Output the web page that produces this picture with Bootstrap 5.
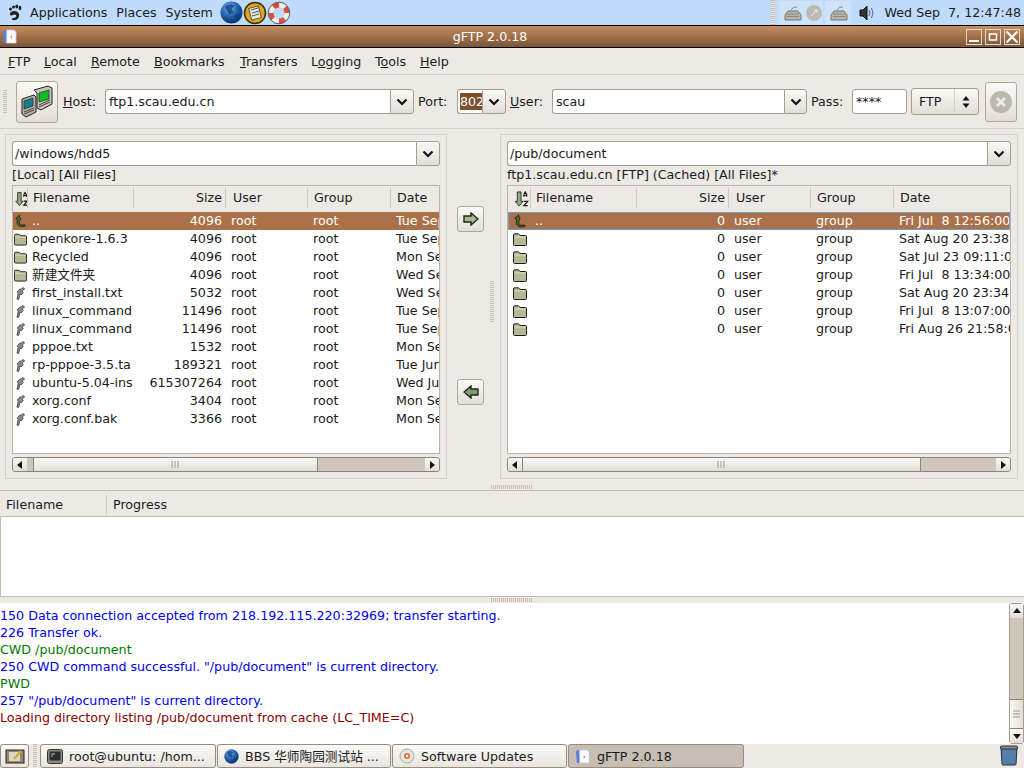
<!DOCTYPE html>
<html lang="en"><head><meta charset="utf-8"><title>gFTP 2.0.18</title>
<link href="https://cdn.jsdelivr.net/npm/bootstrap@5.3.0/dist/css/bootstrap.min.css" rel="stylesheet">
<style>
html,body{height:768px;overflow:hidden}
body{background:#edeae5;color:#1a1a1a;font:12.67px/17px "DejaVu Sans","Noto Sans CJK SC",sans-serif;width:1024px}
.defs{position:absolute;width:0;height:0}
.shell{height:768px}
.gp{height:26px;background:#bfdcfd;border-bottom:1px solid #000;flex:none}
.gp .m{margin-left:9px}
.gp .logo{margin-left:8px}
.gp .m0{margin-left:8px}
.tray{background:#cfe3f8}
.title{height:22px;flex:none;background:linear-gradient(#c68c5e,#7a5537);border-bottom:1px solid #000;color:#fff}
.title .t{flex:1;text-align:center}
.wb{width:16px;height:16px;border:1px solid #e8d6c6;margin-left:3px;display:flex;align-items:center;justify-content:center}
.menubar{height:27px;flex:none;border-bottom:1px solid #d6d0c8;padding-left:8px}
.menubar span{display:block;white-space:nowrap}
.tb{height:54px;flex:none;border-bottom:1px solid #d6d0c8;padding-left:3px}
.grip{width:4px;flex:none;background:repeating-linear-gradient(#c8bfb4 0 1px,#edeae5 1px 2px)}
.g25{height:24px;margin-right:9px}
.fbtn{padding:0;background:linear-gradient(#fbfaf8,#e2ddd6);border:1px solid #b3a698;border-radius:3px;display:flex;align-items:center;justify-content:center;flex:none;color:#000}
.connect{width:42px;height:42px;margin-right:5px}
.stop{width:32px;height:40px;margin-left:6px}
.inp{height:25px;flex:none;background:#fff;border:1px solid #a99c8d;border-radius:3px 0 0 3px;border-right:0;padding:0 3px;line-height:23px;overflow:hidden;white-space:nowrap;color:#1a1a1a}
.dd{width:24px;height:25px;flex:none;background:linear-gradient(#fbfaf8,#e2ddd6);border:1px solid #a99c8d;border-radius:0 3px 3px 0;display:flex;align-items:center;justify-content:center}
.lbl{flex:none;margin-left:4px}
.sel{background:#7c4f2d;color:#fff;display:inline-block;line-height:17px}
.pass{border-right:1px solid #a99c8d;border-radius:3px}
.proto{width:68px;height:27px;flex:none;background:linear-gradient(#fbfaf8,#e2ddd6);border:1px solid #a99c8d;border-radius:3px;margin-left:4px;padding-left:7px}
.proto i{display:block;width:1px;height:25px;background:#d6d0c8;margin-left:auto;margin-right:7px}
.proto svg{margin-right:8px}
.panes{height:355px;flex:none;padding:5px 6px 5px 5px}
.pane{border:1px solid #d6d0c8;padding:6px 6px 5px 6px;height:345px;min-width:0;flex:none}
.pl{width:442px}.pr{width:518px}
.mid{width:53px;flex:none;position:relative}
.arrow{width:27px;height:26px;position:absolute;left:10px}
.vgrip{position:absolute;left:43px;top:147px;height:42px;width:4px;background:repeating-linear-gradient(#cabfb3 0 1px,#edeae5 1px 2px)}
.path{height:25px}
.path .inp{flex:1;padding:0 2px}
.cap{height:17px;line-height:17px;white-space:nowrap;overflow:hidden}
.lst{height:269px;border:1px solid #bdb3a6;background:#fff;overflow:hidden;flex:none;margin-top:2px}
.hd{height:26px;background:#edeae5;display:flex;align-items:center;padding-bottom:2px}
.hd>div{height:20px;line-height:20px;border-left:1px solid #d0c9bf;padding-left:5px;flex:none;white-space:nowrap}
.hd>div:first-child{border:0;padding:0 0 0 2px}
.hd .c3{padding-right:3px;text-align:right}
.hd .c4{padding-left:7px}
.hd .c5,.hd .c6{padding-left:6px}
.r{height:18px;display:flex;line-height:18px;white-space:nowrap}
.r>div{flex:none;overflow:hidden;padding-left:6px}
.r>div:first-child{padding-left:1px;display:flex;align-items:center}
.r .c2{padding-left:5px}
.r .s{text-align:right;padding:0 3px 0 0}
.r.on{background:#ab7249;color:#fff}
.pr .r.on{outline:1px solid #6f9cc9;outline-offset:-1px}
.c1{width:14px}.c2{width:106px}.c3{width:92px}.c4{width:82px}.c5{width:83px}.c6{width:60px}
.pr .c1{width:22px}.pr .c6{width:125px}
.pr .r>div:first-child{padding-left:5px}
.sbh{height:15px;margin-top:3px;display:flex;background:#d0c7bc;border:1px solid #8f8476;border-radius:3px;flex:none;overflow:hidden}
.sb-b{width:14px;flex:none;background:linear-gradient(#fbfaf8,#e2ddd6);display:flex;align-items:center;justify-content:center}
.thumb{background:linear-gradient(#fbfaf8,#e2ddd6);border-left:1px solid #8f8476;border-right:1px solid #8f8476;display:flex;align-items:center;justify-content:center;flex:none;height:100%}
.sp{width:6px;flex:none}
.hg{height:6px;display:flex;justify-content:flex-end;flex:none}
.hg i{display:block;width:42px;height:4px;margin:1px 491px 0 0;background:repeating-linear-gradient(90deg,#c8bfb4 0 1px,#edeae5 1px 2px)}
.xfer{height:107px;flex:none;border-top:1px solid #c4bbae;border-bottom:1px solid #c4bbae}
.xh{height:26px;border-bottom:1px solid #c4bbae;display:flex;align-items:center;flex:none}
.xh div{height:20px;line-height:20px;margin-top:2px}
.xh .a{width:107px;padding-left:6px;border-right:1px solid #d0c9bf}
.xh .b2{padding-left:6px}
.xb{flex:1;background:#fff;border-left:1px solid #c4bbae}
.log{height:141px;flex:none;background:#fff;position:relative;padding:4px 0 0 0;overflow:hidden}
.log div.l{height:17px;white-space:nowrap}
.b{color:#0000f0}.g{color:#007800}.d{color:#8b0000}
.vs{position:absolute;right:0;top:0;width:15px;height:141px;background:#d0c7bc;border:1px solid #a99c8d;border-radius:3px;display:flex;flex-direction:column;justify-content:space-between}
.vs b{height:14px;background:linear-gradient(#fbfaf8,#e2ddd6);display:flex;align-items:center;justify-content:center}
.vthumb{position:absolute;left:0;right:0;top:95px;height:30px;background:linear-gradient(90deg,#fbfaf8,#e2ddd6);border-top:1px solid #8f8476;border-bottom:1px solid #8f8476;display:flex;align-items:center;justify-content:center}
.tk{flex:none;height:24px}
.tk>.grip{margin:0 3px 0 4px}
.tbtn{height:24px;background:linear-gradient(#fbfaf8,#e9e5df);border:1px solid #998c7e;border-radius:3px;width:176px;flex:none;padding-left:6px;gap:6px;white-space:nowrap;overflow:hidden;margin-left:1px}
.tbtn.first{margin-left:0}
.tbtn.on{background:#c6bdb3;gap:7px}
.w174{width:174px}.w175{width:175px}
.desk{width:29px;padding:0;justify-content:center;margin:0}
.bin{margin-right:5px}
</style></head>
<body>
<svg class="defs" aria-hidden="true">
<defs>
<radialGradient id="gg" cx=".4" cy=".3" r=".8"><stop offset="0" stop-color="#7fb3e8"/><stop offset=".5" stop-color="#1e5fa9"/><stop offset="1" stop-color="#06234f"/></radialGradient>
<symbol id="fold" viewBox="0 0 14 13"><path d="M.5 3V11.5Q.5 12.5 1.5 12.5H12.5Q13.5 12.5 13.5 11.5V3.5Q13.5 2.5 12.5 2.5H7L5.5 .8H2Q.5 .8 .5 2Z" fill="#b7b795" stroke="#1e1e14"/><path d="M1.5 4H12.5" stroke="#dedec6"/></symbol>
<symbol id="file" viewBox="0 0 14 15"><path d="M9.5 1L11.5 2.5 8.8 5 10 6.3 7.6 9 6.6 8 5 14 3.2 13.5 4.6 7 3.4 6 6.5 2.4 7.5 3.2Z" fill="#8e8a82" stroke="#3a3833" stroke-width=".8"/></symbol>
<symbol id="up" viewBox="0 0 16 16"><path d="M2 5L6.5 1 6.5 3.5C10 3.5 6 8 6.5 10.500 7 13 10 13.500 13 12.500L14 14C10 15.500 5.500 15 4 11.500 3 9 5 7 4 6Z" fill="#4e6b40" stroke="#0f1a0c"/></symbol>
<symbol id="sort" viewBox="0 0 16 17"><path d="M3 1H7V11H9.2L5 16 .8 11H3Z" fill="#93ab82" stroke="#22301d"/><path d="M10 3.500L11.500 1 13 3.500V6M10 3.500V6M10 4.500H13" fill="none" stroke="#111" stroke-width="1.200"/><path d="M10 11H14L10 15.500H14" fill="none" stroke="#111" stroke-width="1.300"/></symbol>
<symbol id="ch" viewBox="0 0 12 8"><path d="M1.5 1.5L6 6 10.5 1.5" fill="none" stroke="#111" stroke-width="2.2"/></symbol>
<symbol id="pen" viewBox="0 0 16 16"><path d="M1 2L6 .5 8 15H2Z" fill="#5b7fd8"/><path d="M5 1H13L15 3V15H5Z" fill="#fff" stroke="#c9c6d6" stroke-width=".8"/><path d="M9 7L11 8 9.5 11Z" fill="#8d8cab"/></symbol>
<symbol id="globe" viewBox="0 0 24 24"><circle cx="12" cy="12" r="11.5" fill="url(#gg)"/><path d="M5 6Q10 2 15 5L12 8 14 12 10 14 7 10Z" fill="#0d3a78" opacity=".75"/><path d="M15 15L21 13 18 20Z" fill="#0d3a78" opacity=".7"/></symbol>
<symbol id="kbd" viewBox="0 0 26 24"><path d="M6 14L9 10H19L22 14V19H6Z" fill="#b6b4ab" stroke="#777"/><path d="M8 13H20M8 15.500H20" stroke="#8b8a82"/><path d="M12 9Q14 5 18 6" fill="none" stroke="#888"/></symbol>
</defs></svg>
<div class="shell d-flex flex-column">
 <div class="gp d-flex align-items-center">
  <svg class="logo" width="14" height="17" viewBox="0 0 14 17"><path d="M3 8C6 6 10 7 11 10 12 14 8 17 5 16 2.500 15.500 4 14 6 14 8.500 13.500 9 11 7 10.500 5 10 4 12 3 11.500 1.500 11 1.500 9 3 8Z" fill="#222"/><circle cx="2.500" cy="5" r="1.500" fill="#222"/><circle cx="5.500" cy="3" r="1.500" fill="#222"/><ellipse cx="8.800" cy="2.500" rx="1.400" ry="2" fill="#222"/><ellipse cx="12" cy="4" rx="1.400" ry="2.300" fill="#222"/></svg>
  <span class="m0">Applications</span><span class="m">Places</span><span class="m">System</span>
  <svg style="margin-left:7px" width="23" height="23"><use href="#globe"/></svg>
  <svg width="24" height="24" viewBox="0 0 24 24"><circle cx="12" cy="12" r="10.500" fill="#e0a818" stroke="#3a2c08" stroke-width="1.500"/><rect x="7" y="6" width="10" height="12" fill="#e8e6de" stroke="#555" transform="rotate(-15 12 12)"/><path d="M8 9L15 7M9 12L16 10M9 15L16 13" stroke="#555"/></svg>
  <svg width="24" height="24" viewBox="0 0 24 24"><circle cx="12" cy="12" r="8" fill="none" stroke="#d9503a" stroke-width="5"/><circle cx="12" cy="12" r="8" fill="none" stroke="#eeeeea" stroke-width="5" stroke-dasharray="6.500 6"/><circle cx="12" cy="12" r="10.800" fill="none" stroke="#444" stroke-width=".8"/></svg>
  <div class="ms-auto d-flex align-items-center h-100">
   <div class="grip h-100"></div>
   <svg class="ms-1 tray" width="26" height="24"><use href="#kbd"/></svg>
   <svg class="tray" width="18" height="24" viewBox="0 0 18 24"><circle cx="9" cy="12" r="8" fill="#b9bab4"/><path d="M6 15L12 9M9 9H12V12" stroke="#eee" fill="none"/></svg>
   <svg class="tray" style="margin-left:2px" width="26" height="24"><use href="#kbd"/></svg>
   <svg class="ms-2" width="17" height="16" viewBox="0 0 17 16"><path d="M1 5H4L8 1V15L4 11H1Z" fill="#333" stroke="#111"/><path d="M10 5Q12 8 10 11M12.500 3Q15.500 8 12.500 13" fill="none" stroke="#5b5fa0"/></svg>
   <span style="margin-left:9px;margin-right:3px;white-space:pre">Wed Sep  7, 12:47:48</span>
  </div>
 </div>
 <div class="title d-flex align-items-center">
  <svg style="margin-left:2px" width="15" height="15"><use href="#pen"/></svg>
  <div class="t">gFTP 2.0.18</div>
  <div class="wb"><svg width="12" height="12"><path d="M1 10H11" stroke="#fff" stroke-width="2"/></svg></div>
  <div class="wb"><svg width="10" height="10"><rect x="1.500" y="2" width="7" height="6" fill="none" stroke="#fff" stroke-width="1.500"/></svg></div>
  <div class="wb me-1"><svg width="14" height="14"><path d="M1.500 1.500L12.500 12.500M12.500 1.500L1.500 12.500" stroke="#fff" stroke-width="2.200"/></svg></div>
 </div>
 <div class="menubar d-flex align-items-center">
  <span style="width:36px"><u>F</u>TP</span><span style="width:47px"><u>L</u>ocal</span><span style="width:63px"><u>R</u>emote</span><span style="width:86px"><u>B</u>ookmarks</span><span style="width:71px"><u>T</u>ransfers</span><span style="width:64px">L<u>o</u>gging</span><span style="width:45px">T<u>o</u>ols</span><span><u>H</u>elp</span>
 </div>
 <div class="tb d-flex align-items-center">
  <div class="grip g25"></div>
  <button class="fbtn connect" type="button" aria-label="Connect"><svg width="34" height="34" viewBox="0 0 34 34"><path d="M2 14L14 10 16 12V27L6 32 2 29Z" fill="#b3b2a8" stroke="#222"/><path d="M4 16L13 13V21L4 24Z" fill="#118088" stroke="#222" stroke-width=".7"/><path d="M4 27L14 23M4 29L14 25" stroke="#444"/><path d="M14 5L28 1 32 3V19L21 25 17 23V8Z" fill="#c5c4ba" stroke="#222"/><path d="M19 8L29 5V14L19 17Z" fill="#10c020" stroke="#222" stroke-width=".7"/><path d="M19 20L30 15M19 22L30 17" stroke="#444"/></svg></button>
  <span class="lbl" style="margin-left:0;width:42px"><u>H</u>ost:</span>
  <div class="inp" style="width:285px">ftp1.scau.edu.cn</div><div class="dd"><svg width="12" height="8"><use href="#ch"/></svg></div>
  <span class="lbl" style="width:39px">Port:</span>
  <div class="inp" style="width:25px;padding:0 2px"><span class="sel">802</span></div><div class="dd"><svg width="12" height="8"><use href="#ch"/></svg></div>
  <span class="lbl" style="width:42px"><u>U</u>ser:</span>
  <div class="inp" style="width:232px">scau</div><div class="dd" style="width:23px"><svg width="12" height="8"><use href="#ch"/></svg></div>
  <span class="lbl" style="width:41px">Pass:</span>
  <div class="inp pass" style="width:55px">****</div>
  <div class="proto d-flex align-items-center"><span>FTP</span><i></i><svg width="8" height="14"><path d="M4 1L7.500 5.500H.5ZM4 13L.5 8.500H7.500Z" fill="#111"/></svg></div>
  <button class="fbtn stop" type="button" aria-label="Stop"><svg width="24" height="24" viewBox="0 0 24 24"><circle cx="12" cy="12" r="11" fill="#bcb8b1"/><path d="M8 8L16 16M16 8L8 16" stroke="#eceae6" stroke-width="3"/></svg></button>
 </div>
 <div class="panes d-flex">
  <div class="pane pl d-flex flex-column">
   <div class="path d-flex"><div class="inp">/windows/hdd5</div><div class="dd"><svg width="12" height="8"><use href="#ch"/></svg></div></div>
   <div class="cap">[Local] [All Files]</div>
   <div class="lst">
    <div class="hd"><div class="c1"><svg width="14" height="16"><use href="#sort"/></svg></div><div class="c2">Filename</div><div class="c3">Size</div><div class="c4">User</div><div class="c5">Group</div><div class="c6">Date</div></div>
    <div class="r on"><div class="c1"><svg width="14" height="14"><use href="#up"/></svg></div><div class="c2">..</div><div class="c3 s">4096</div><div class="c4">root</div><div class="c5">root</div><div class="c6">Tue Sep</div></div>
    <div class="r"><div class="c1"><svg width="14" height="13"><use href="#fold"/></svg></div><div class="c2">openkore-1.6.3</div><div class="c3 s">4096</div><div class="c4">root</div><div class="c5">root</div><div class="c6">Tue Sep</div></div>
    <div class="r"><div class="c1"><svg width="14" height="13"><use href="#fold"/></svg></div><div class="c2">Recycled</div><div class="c3 s">4096</div><div class="c4">root</div><div class="c5">root</div><div class="c6">Mon Se</div></div>
    <div class="r"><div class="c1"><svg width="14" height="13"><use href="#fold"/></svg></div><div class="c2">新建文件夹</div><div class="c3 s">4096</div><div class="c4">root</div><div class="c5">root</div><div class="c6">Wed Se</div></div>
    <div class="r"><div class="c1"><svg width="14" height="15"><use href="#file"/></svg></div><div class="c2">first_install.txt</div><div class="c3 s">5032</div><div class="c4">root</div><div class="c5">root</div><div class="c6">Wed Se</div></div>
    <div class="r"><div class="c1"><svg width="14" height="15"><use href="#file"/></svg></div><div class="c2">linux_command</div><div class="c3 s">11496</div><div class="c4">root</div><div class="c5">root</div><div class="c6">Tue Sep</div></div>
    <div class="r"><div class="c1"><svg width="14" height="15"><use href="#file"/></svg></div><div class="c2">linux_command</div><div class="c3 s">11496</div><div class="c4">root</div><div class="c5">root</div><div class="c6">Tue Sep</div></div>
    <div class="r"><div class="c1"><svg width="14" height="15"><use href="#file"/></svg></div><div class="c2">pppoe.txt</div><div class="c3 s">1532</div><div class="c4">root</div><div class="c5">root</div><div class="c6">Mon Se</div></div>
    <div class="r"><div class="c1"><svg width="14" height="15"><use href="#file"/></svg></div><div class="c2">rp-pppoe-3.5.ta</div><div class="c3 s">189321</div><div class="c4">root</div><div class="c5">root</div><div class="c6">Tue Jun</div></div>
    <div class="r"><div class="c1"><svg width="14" height="15"><use href="#file"/></svg></div><div class="c2">ubuntu-5.04-ins</div><div class="c3 s">615307264</div><div class="c4">root</div><div class="c5">root</div><div class="c6">Wed Jur</div></div>
    <div class="r"><div class="c1"><svg width="14" height="15"><use href="#file"/></svg></div><div class="c2">xorg.conf</div><div class="c3 s">3404</div><div class="c4">root</div><div class="c5">root</div><div class="c6">Mon Se</div></div>
    <div class="r"><div class="c1"><svg width="14" height="15"><use href="#file"/></svg></div><div class="c2">xorg.conf.bak</div><div class="c3 s">3366</div><div class="c4">root</div><div class="c5">root</div><div class="c6">Mon Se</div></div>
   </div>
   <div class="sbh"><div class="sb-b"><svg width="6" height="8"><path d="M5 0V8L0 4Z" fill="#111"/></svg></div><div class="sp"></div><div class="thumb" style="width:285px"><svg width="9" height="7"><path d="M1 0V7M4 0V7M7 0V7" stroke="#a49a8d"/></svg></div><div class="flex-grow-1"></div><div class="sb-b"><svg width="6" height="8"><path d="M1 0V8L6 4Z" fill="#111"/></svg></div></div>
  </div>
  <div class="mid">
   <button class="fbtn arrow" style="top:72px" type="button" aria-label="Download"><svg width="16" height="14" viewBox="0 0 16 14"><path d="M1 4H8V1L15 7 8 13V10H1Z" fill="#a3bb93" stroke="#1c2a17" stroke-width="1.400"/></svg></button>
   <div class="vgrip"></div>
   <button class="fbtn arrow" style="top:245px" type="button" aria-label="Upload"><svg width="16" height="14" viewBox="0 0 16 14"><path d="M15 4H8V1L1 7 8 13V10H15Z" fill="#7d9a72" stroke="#1c2a17" stroke-width="1.400"/></svg></button>
  </div>
  <div class="pane pr d-flex flex-column">
   <div class="path d-flex"><div class="inp">/pub/document</div><div class="dd"><svg width="12" height="8"><use href="#ch"/></svg></div></div>
   <div class="cap">ftp1.scau.edu.cn [FTP] (Cached) [All Files]*</div>
   <div class="lst">
    <div class="hd"><div class="c1"><svg width="16" height="16" class="ms-1"><use href="#sort"/></svg></div><div class="c2">Filename</div><div class="c3">Size</div><div class="c4">User</div><div class="c5">Group</div><div class="c6">Date</div></div>
    <div class="r on"><div class="c1"><svg width="14" height="14"><use href="#up"/></svg></div><div class="c2">..</div><div class="c3 s">0</div><div class="c4">user</div><div class="c5">group</div><div class="c6">Fri Jul &nbsp;8 12:56:00</div></div>
    <div class="r"><div class="c1"><svg width="14" height="13"><use href="#fold"/></svg></div><div class="c2"></div><div class="c3 s">0</div><div class="c4">user</div><div class="c5">group</div><div class="c6">Sat Aug 20 23:38</div></div>
    <div class="r"><div class="c1"><svg width="14" height="13"><use href="#fold"/></svg></div><div class="c2"></div><div class="c3 s">0</div><div class="c4">user</div><div class="c5">group</div><div class="c6">Sat Jul 23 09:11:0</div></div>
    <div class="r"><div class="c1"><svg width="14" height="13"><use href="#fold"/></svg></div><div class="c2"></div><div class="c3 s">0</div><div class="c4">user</div><div class="c5">group</div><div class="c6">Fri Jul &nbsp;8 13:34:00</div></div>
    <div class="r"><div class="c1"><svg width="14" height="13"><use href="#fold"/></svg></div><div class="c2"></div><div class="c3 s">0</div><div class="c4">user</div><div class="c5">group</div><div class="c6">Sat Aug 20 23:34</div></div>
    <div class="r"><div class="c1"><svg width="14" height="13"><use href="#fold"/></svg></div><div class="c2"></div><div class="c3 s">0</div><div class="c4">user</div><div class="c5">group</div><div class="c6">Fri Jul &nbsp;8 13:07:00</div></div>
    <div class="r"><div class="c1"><svg width="14" height="13"><use href="#fold"/></svg></div><div class="c2"></div><div class="c3 s">0</div><div class="c4">user</div><div class="c5">group</div><div class="c6">Fri Aug 26 21:58:0</div></div>
   </div>
   <div class="sbh"><div class="sb-b"><svg width="6" height="8"><path d="M5 0V8L0 4Z" fill="#111"/></svg></div><div class="thumb" style="width:399px"><svg width="9" height="7"><path d="M1 0V7M4 0V7M7 0V7" stroke="#a49a8d"/></svg></div><div class="flex-grow-1"></div><div class="sb-b"><svg width="6" height="8"><path d="M1 0V8L6 4Z" fill="#111"/></svg></div></div>
  </div>
 </div>
 <div class="hg"><i></i></div>
 <div class="xfer d-flex flex-column">
  <div class="xh"><div class="a">Filename</div><div class="b2">Progress</div></div>
  <div class="xb"></div>
 </div>
 <div class="hg"><i></i></div>
 <div class="log">
  <div class="l b">150 Data connection accepted from 218.192.115.220:32969; transfer starting.</div>
  <div class="l b">226 Transfer ok.</div>
  <div class="l g">CWD /pub/document</div>
  <div class="l b">250 CWD command successful. "/pub/document" is current directory.</div>
  <div class="l g">PWD</div>
  <div class="l b">257 "/pub/document" is current directory.</div>
  <div class="l d">Loading directory listing /pub/document from cache (LC_TIME=C)</div>
  <div class="vs"><b><svg width="8" height="6"><path d="M0 5H8L4 0Z" fill="#111"/></svg></b><div class="vthumb"><svg width="7" height="9"><path d="M0 1H7M0 4H7M0 7H7" stroke="#a49a8d"/></svg></div><b><svg width="8" height="6"><path d="M0 1H8L4 6Z" fill="#111"/></svg></b></div>
 </div>
 <div class="tk d-flex">
  <div class="tbtn desk d-flex align-items-center"><svg width="20" height="16" viewBox="0 0 20 16"><rect x="1" y="2" width="18" height="13" fill="#8d8a70" stroke="#222"/><rect x="4" y="4" width="11" height="9" fill="#dcd9c0"/><path d="M9 11L16 3" stroke="#d9a520" stroke-width="2"/></svg></div>
  <div class="grip h-100"></div>
  <div class="tbtn first d-flex align-items-center"><svg width="16" height="15" viewBox="0 0 16 15"><rect x=".5" y=".5" width="15" height="14" rx="2" fill="#8c8b83" stroke="#333"/><rect x="2.500" y="2.500" width="11" height="9" fill="#2b2d2b"/><path d="M4 5H8M4 7H6" stroke="#bbb"/></svg><span>root@ubuntu: /hom...</span></div>
  <div class="tbtn w174 d-flex align-items-center"><svg width="15" height="15"><use href="#globe"/></svg><span>BBS 华师陶园测试站 ...</span></div>
  <div class="tbtn w175 d-flex align-items-center"><svg width="16" height="16" viewBox="0 0 16 16"><circle cx="8" cy="8" r="7" fill="#e6e4de" stroke="#aaa"/><circle cx="8" cy="8" r="3" fill="#d97a3c"/><circle cx="8" cy="8" r="1.200" fill="#fff"/></svg><span>Software Updates</span></div>
  <div class="tbtn on d-flex align-items-center"><svg width="15" height="15"><use href="#pen"/></svg><span>gFTP 2.0.18</span></div>
  <svg class="ms-auto bin" width="20" height="22" viewBox="0 0 20 22"><path d="M2 4H18L17 20Q17 21 16 21H4Q3 21 3 20Z" fill="#567fa8" stroke="#2a2f36"/><rect x="1.500" y="2" width="17" height="3" rx="1" fill="#8a8f96" stroke="#2a2f36"/></svg>
 </div>
</div>
</body></html>
